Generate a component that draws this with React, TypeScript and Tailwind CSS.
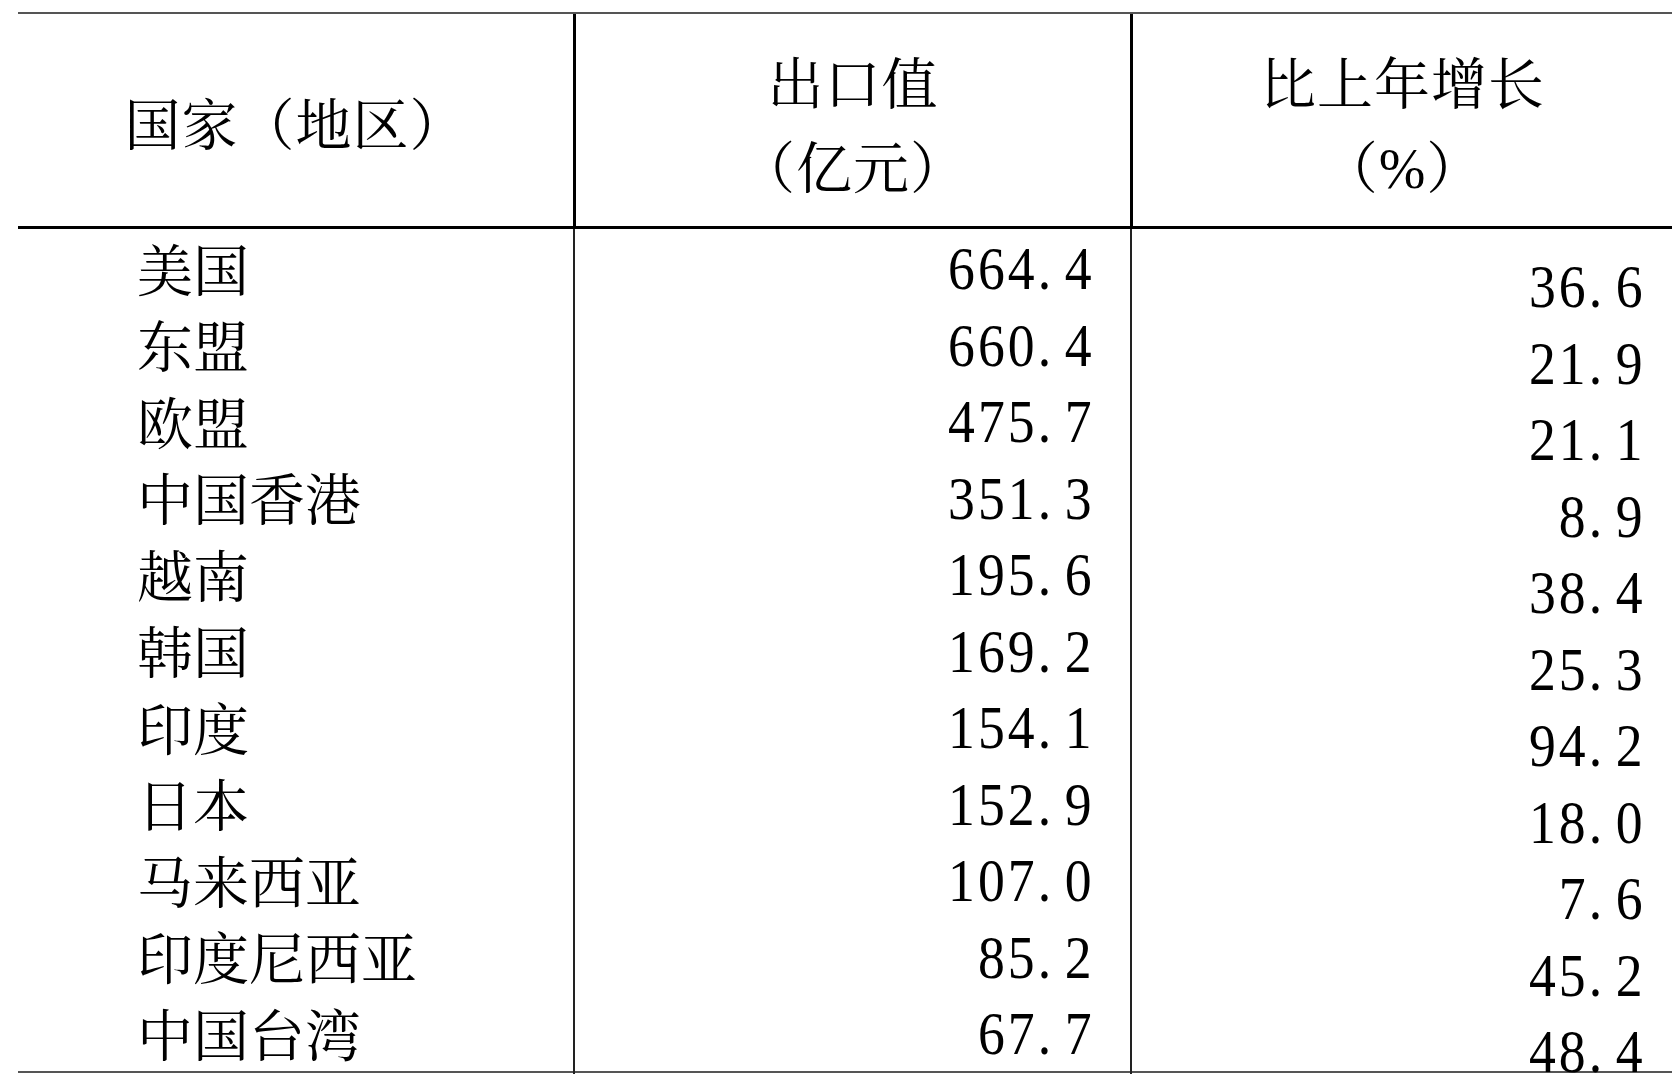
const rows: [string, string, string][] = [
  ["美国", "664.4", "36.6"],
  ["东盟", "660.4", "21.9"],
  ["欧盟", "475.7", "21.1"],
  ["中国香港", "351.3", "8.9"],
  ["越南", "195.6", "38.4"],
  ["韩国", "169.2", "25.3"],
  ["印度", "154.1", "94.2"],
  ["日本", "152.9", "18.0"],
  ["马来西亚", "107.0", "7.6"],
  ["印度尼西亚", "85.2", "45.2"],
  ["中国台湾", "67.7", "48.4"],
];

// digits in the source are a narrow serif with loose spacing
function Num({ value }: { value: string }) {
  const [whole, frac] = value.split(".");
  return (
    <span className="inline-block origin-right scale-x-[0.88] whitespace-nowrap text-[61px] leading-[44px] tracking-[3.5px]">
      {whole}.<span className="ml-[12px]">{frac}</span>
    </span>
  );
}

export default function App() {
  return (
    <div className="min-h-screen bg-white pl-[18px] pt-[12px] font-['Liberation_Serif','Noto_Serif_CJK_SC','Noto_Sans_CJK_SC',serif] text-black">
      <div className="border-t-2 border-b-2 border-[#555]">
        <div className="grid h-[215px] grid-cols-[555px_557px_1fr] border-b-[3px] border-black text-[56px]">
          <div className="flex items-center justify-center pt-[12px] leading-none tracking-[1px]">
            国家（地区）
          </div>
          <div className="flex flex-col items-center justify-center border-l-[3px] border-black pt-[14px] leading-[84px] tracking-[1px]">
            <span>出口值</span>
            <span>（亿元）</span>
          </div>
          <div className="flex flex-col items-center justify-center border-l-[3px] border-black pt-[14px] leading-[84px] tracking-[1px]">
            <span>比上年增长</span>
            <span>（%）</span>
          </div>
        </div>

        {rows.map(([name, exportValue, growth]) => (
          <div
            key={name}
            className="grid h-[76.5px] grid-cols-[555px_557px_1fr] leading-none"
          >
            <div className="flex items-center pl-[119px] pt-[5px] text-[56px]">
              {name}
            </div>
            <div className="flex items-center justify-end border-l-2 border-[#222] pr-[35px]">
              <Num value={exportValue} />
            </div>
            <div className="flex items-center justify-end border-l-2 border-[#222] pr-[26px] pt-[36px]">
              <Num value={growth} />
            </div>
          </div>
        ))}
      </div>
    </div>
  );
}
